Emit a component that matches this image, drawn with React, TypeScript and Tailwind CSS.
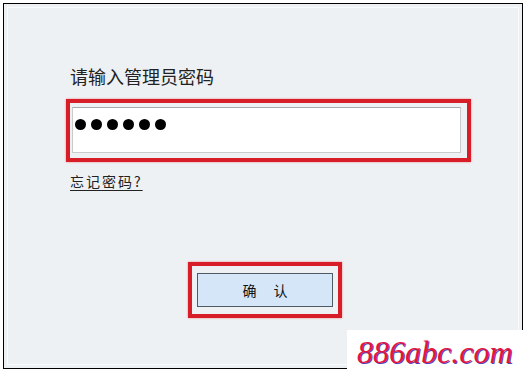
export default function App() {
  const dots = [0, 1, 2, 3, 4, 5];

  return (
    <div
      className="relative w-[526px] h-[370px] overflow-hidden bg-white pt-[3px] pl-[3px]"
      style={{ fontFamily: '"Noto Sans CJK SC", "Noto Sans", sans-serif' }}
    >
      {/* dialog frame */}
      <div className="w-[520px] h-[366px] border border-black bg-[#eef1f4]">
        <div className="m-[3px] h-[358px] border border-[#fafbfc] pl-[58px] pt-[56px]">
          <p className="ml-[4px] text-[18px] leading-[24px] text-[#222]">请输入管理员密码</p>

          {/* password field, highlighted */}
          <div className="mt-[11px] w-[405px] h-[63px] border-4 border-[#d71e28] pl-[2px] pt-[4px] shadow-[0_0_2px_#e88]">
            <div className="w-[389px] h-[46px] border border-[#cacaca] border-t-[#a8a8a8] bg-white pl-[2px] pt-[11px]">
              <div className="flex gap-[5px]">
                {dots.map((d) => (
                  <span key={d} className="block w-[11px] h-[11px] rounded-full bg-black" />
                ))}
              </div>
            </div>
          </div>

          <p className="mt-[9px] ml-[4px] text-[14px] leading-[20px] tracking-[2px] text-[#222]">
            <span className="underline underline-offset-[3px]">忘记密码?</span>
          </p>

          {/* confirm button, highlighted */}
          <div className="mt-[71px] ml-[122px] w-[154px] h-[56px] border-4 border-[#d71e28] pl-[5px] pt-[7px] shadow-[0_0_2px_#e88]">
            <button className="w-[136px] h-[34px] border border-[#505a64] bg-[#d5e6f8] flex items-center justify-center gap-[17px] text-[14px] leading-[20px] text-[#111]">
              <span>确</span>
              <span>认</span>
            </button>
          </div>
        </div>
      </div>

      {/* watermark */}
      <div className="absolute left-[347px] top-[330px] w-[179px] h-[40px] bg-white pl-[10px] pt-[4px]">
        <span
          className="block text-[32px] leading-[36px] italic text-[#e3163c] [text-shadow:1px_1px_0_#5b3fb8]"
          style={{ fontFamily: '"Liberation Serif", serif' }}
        >
          886abc.com
        </span>
      </div>
    </div>
  );
}
